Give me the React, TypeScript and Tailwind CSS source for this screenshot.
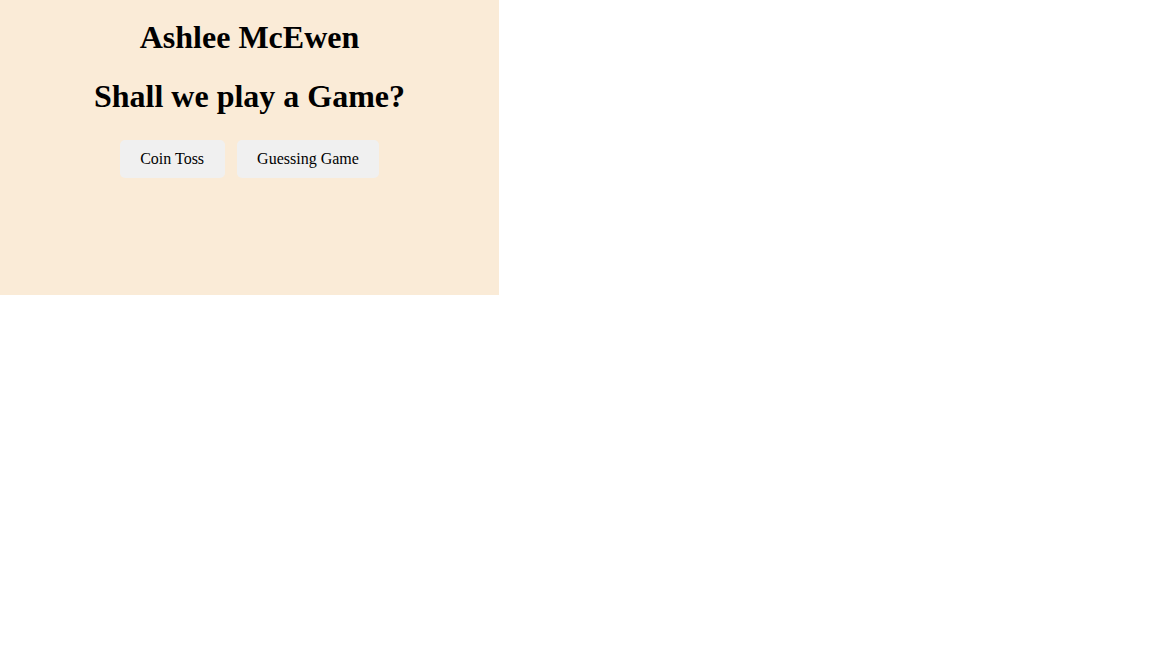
import React from "react";

export default function App() {
  return (
    <div className="min-h-screen bg-white" style={{ fontFamily: '"Liberation Serif", "Times New Roman", serif' }}>
      <div className="w-[499px] h-[295px] bg-[#faebd7] pt-[19px] text-black">
        {/* Headings */}
        <h1 className="text-center text-[32px] font-bold leading-[37px]">Ashlee McEwen</h1>
        <h1 className="mt-[22px] text-center text-[32px] font-bold leading-[37px]">Shall we play a Game?</h1>

        {/* Game buttons */}
        <div className="mt-[25px] flex justify-center gap-3">
          <button className="rounded-[5px] bg-[#f0f0f0] px-[20.5px] py-[10px] text-base leading-[18px]">
            Coin Toss
          </button>
          <button className="rounded-[5px] bg-[#f0f0f0] px-[20.5px] py-[10px] text-base leading-[18px]">
            Guessing Game
          </button>
        </div>
      </div>
    </div>
  );
}
